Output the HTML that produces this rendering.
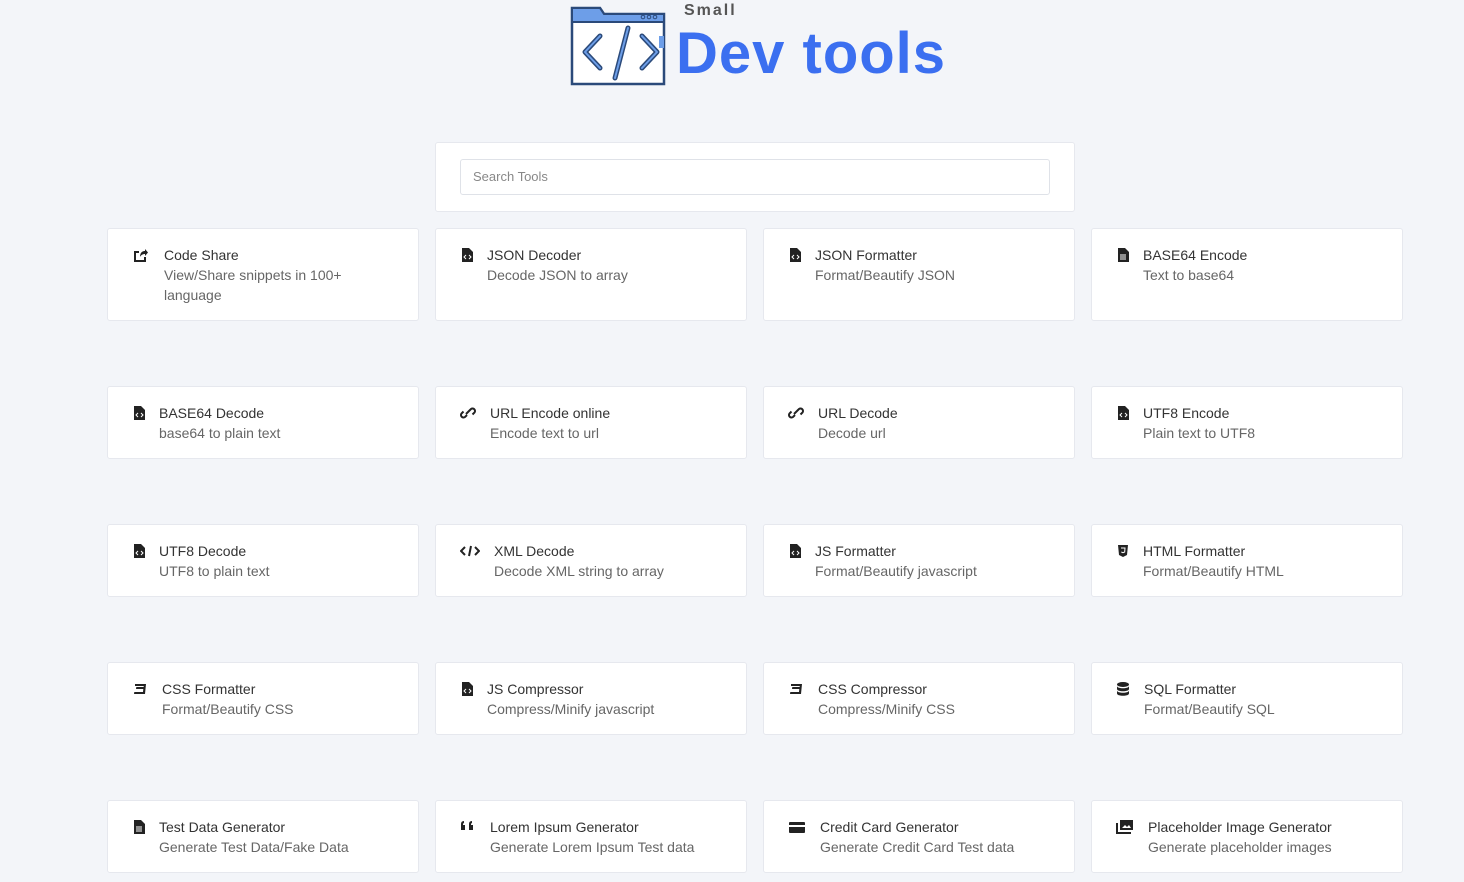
<!DOCTYPE html>
<html><head><meta charset="utf-8"><style>
body{margin:0;background:#f3f5f9;font-family:"Liberation Sans",sans-serif;width:1464px;height:882px;overflow:hidden;position:relative}
.logo{position:absolute;left:570px;top:0}
.small{position:absolute;left:684px;top:2px;font-size:16px;font-weight:bold;color:#555;letter-spacing:2px}
.dev{position:absolute;left:676px;top:20px;font-size:58px;font-weight:bold;color:#3b6ff0;letter-spacing:1px}
.sbox{position:absolute;left:435px;top:142px;width:638px;height:68px;background:#fff;border:1px solid #e6e8ee;border-radius:3px}
.sin{position:absolute;left:24px;top:16px;width:590px;height:36px;border:1px solid #dfe2e8;border-radius:3px;font-size:13px;color:#888;line-height:34px;padding-left:12px;box-sizing:border-box}
.c{position:absolute;width:312px;background:#fff;border:1px solid #e6e8ee;border-radius:3px;box-sizing:border-box}
.c svg{position:absolute;left:24px;top:19px}
.t{position:absolute;top:16px;font-size:14px;line-height:20px;color:#333;margin-left:-1px}
.d{color:#666}
</style></head><body>
<svg class="logo" width="100" height="88" viewBox="0 0 100 88">
<path d="M2 8 h28 l4 6 h60 v70 h-92z" fill="#fff" stroke="#2b4a7a" stroke-width="2.5"/>
<path d="M2 8 h28 l4 6 h60 v8 h-92z" fill="#6d9ee8" stroke="#2b4a7a" stroke-width="2"/>
<circle cx="73" cy="17" r="1.8" fill="none" stroke="#2b4a7a"/><circle cx="79" cy="17" r="1.8" fill="none" stroke="#2b4a7a"/><circle cx="85" cy="17" r="1.8" fill="none" stroke="#2b4a7a"/>
<rect x="89" y="36" width="5" height="12" fill="#6d9ee8"/>
<path d="M30 36 L15 52 L30 68 M72 36 L87 52 L72 68" fill="none" stroke="#2b4a7a" stroke-width="5" stroke-linecap="round" stroke-linejoin="round"/>
<path d="M30 36 L15 52 L30 68 M72 36 L87 52 L72 68" fill="none" stroke="#6d9ee8" stroke-width="2" stroke-linecap="round" stroke-linejoin="round"/>
<path d="M58 28 L45 78" stroke="#2b4a7a" stroke-width="5" stroke-linecap="round"/><path d="M58 28 L45 78" stroke="#6d9ee8" stroke-width="2" stroke-linecap="round"/>
</svg>
<div class="small">Small</div>
<div class="dev">Dev tools</div>
<div class="sbox"><div class="sin">Search Tools</div></div>

<div class="c" style="left:107px;top:228px;height:93px"><svg width="16" height="14"><path d="M2 3h5v2H4v7h8v-3h2v5H2z M8 9c0-4 2-6 5-6V1l3 3.5-3 3.5V6c-2 0-4 1-5 3z" fill="#222"/></svg><div class="t" style="left:57px">Code Share<br><span class="d">View/Share snippets in 100+<br>language</span></div></div>
<div class="c" style="left:435px;top:228px;height:93px"><svg width="14" height="14"><path d="M2 0h7l4 4v10H2z" fill="#222"/><path d="M6 7l-2 2 2 2M9 7l2 2-2 2" stroke="#fff" fill="none"/></svg><div class="t" style="left:52px">JSON Decoder<br><span class="d">Decode JSON to array</span></div></div>
<div class="c" style="left:763px;top:228px;height:93px"><svg width="14" height="14"><path d="M2 0h7l4 4v10H2z" fill="#222"/><path d="M6 7l-2 2 2 2M9 7l2 2-2 2" stroke="#fff" fill="none"/></svg><div class="t" style="left:52px">JSON Formatter<br><span class="d">Format/Beautify JSON</span></div></div>
<div class="c" style="left:1091px;top:228px;height:93px"><svg width="14" height="14"><path d="M2 0h7l4 4v10H2z" fill="#222"/><path d="M4 7h6M4 9h6M4 11h6" stroke="#fff"/></svg><div class="t" style="left:52px">BASE64 Encode<br><span class="d">Text to base64</span></div></div>

<div class="c" style="left:107px;top:386px;height:73px"><svg width="14" height="14"><path d="M2 0h7l4 4v10H2z" fill="#222"/><path d="M6 7l-2 2 2 2M9 7l2 2-2 2" stroke="#fff" fill="none"/></svg><div class="t" style="left:52px">BASE64 Decode<br><span class="d">base64 to plain text</span></div></div>
<div class="c" style="left:435px;top:386px;height:73px"><svg width="16" height="14"><path d="M7 9l-2 2a2.5 2.5 0 01-3.5-3.5l2-2M9 5l2-2a2.5 2.5 0 013.5 3.5l-2 2M6 8l4-4" stroke="#222" stroke-width="2" fill="none"/></svg><div class="t" style="left:55px">URL Encode online<br><span class="d">Encode text to url</span></div></div>
<div class="c" style="left:763px;top:386px;height:73px"><svg width="16" height="14"><path d="M7 9l-2 2a2.5 2.5 0 01-3.5-3.5l2-2M9 5l2-2a2.5 2.5 0 013.5 3.5l-2 2M6 8l4-4" stroke="#222" stroke-width="2" fill="none"/></svg><div class="t" style="left:55px">URL Decode<br><span class="d">Decode url</span></div></div>
<div class="c" style="left:1091px;top:386px;height:73px"><svg width="14" height="14"><path d="M2 0h7l4 4v10H2z" fill="#222"/><path d="M6 7l-2 2 2 2M9 7l2 2-2 2" stroke="#fff" fill="none"/></svg><div class="t" style="left:52px">UTF8 Encode<br><span class="d">Plain text to UTF8</span></div></div>

<div class="c" style="left:107px;top:524px;height:73px"><svg width="14" height="14"><path d="M2 0h7l4 4v10H2z" fill="#222"/><path d="M6 7l-2 2 2 2M9 7l2 2-2 2" stroke="#fff" fill="none"/></svg><div class="t" style="left:52px">UTF8 Decode<br><span class="d">UTF8 to plain text</span></div></div>
<div class="c" style="left:435px;top:524px;height:73px"><svg width="20" height="14"><path d="M5 3L1 7l4 4M15 3l4 4-4 4M11 2L9 12" stroke="#222" stroke-width="2" fill="none"/></svg><div class="t" style="left:59px">XML Decode<br><span class="d">Decode XML string to array</span></div></div>
<div class="c" style="left:763px;top:524px;height:73px"><svg width="14" height="14"><path d="M2 0h7l4 4v10H2z" fill="#222"/><path d="M6 7l-2 2 2 2M9 7l2 2-2 2" stroke="#fff" fill="none"/></svg><div class="t" style="left:52px">JS Formatter<br><span class="d">Format/Beautify javascript</span></div></div>
<div class="c" style="left:1091px;top:524px;height:73px"><svg width="14" height="14"><path d="M2 1h10l-1 10-4 2-4-2z" fill="#222"/><path d="M5 4h4l-.3 4-1.7.7-1.7-.7" stroke="#fff" fill="none"/></svg><div class="t" style="left:52px">HTML Formatter<br><span class="d">Format/Beautify HTML</span></div></div>

<div class="c" style="left:107px;top:662px;height:73px"><svg width="16" height="14"><path d="M3 2h11l-1 10H2l.3-2H11l.3-3H4l.3-2h7.3l.2-1H3z" fill="#222"/></svg><div class="t" style="left:55px">CSS Formatter<br><span class="d">Format/Beautify CSS</span></div></div>
<div class="c" style="left:435px;top:662px;height:73px"><svg width="14" height="14"><path d="M2 0h7l4 4v10H2z" fill="#222"/><path d="M6 7l-2 2 2 2M9 7l2 2-2 2" stroke="#fff" fill="none"/></svg><div class="t" style="left:52px">JS Compressor<br><span class="d">Compress/Minify javascript</span></div></div>
<div class="c" style="left:763px;top:662px;height:73px"><svg width="16" height="14"><path d="M3 2h11l-1 10H2l.3-2H11l.3-3H4l.3-2h7.3l.2-1H3z" fill="#222"/></svg><div class="t" style="left:55px">CSS Compressor<br><span class="d">Compress/Minify CSS</span></div></div>
<div class="c" style="left:1091px;top:662px;height:73px"><svg width="14" height="14"><ellipse cx="7" cy="2.5" rx="6" ry="2.5" fill="#222"/><path d="M1 4c0 3 12 3 12 0v3c0 3-12 3-12 0zM1 8.5c0 3 12 3 12 0v3c0 3-12 3-12 0z" fill="#222"/></svg><div class="t" style="left:53px">SQL Formatter<br><span class="d">Format/Beautify SQL</span></div></div>

<div class="c" style="left:107px;top:800px;height:73px"><svg width="14" height="14"><path d="M2 0h7l4 4v10H2z" fill="#222"/><path d="M4 7h6M4 9h6M4 11h6" stroke="#fff"/></svg><div class="t" style="left:52px">Test Data Generator<br><span class="d">Generate Test Data/Fake Data</span></div></div>
<div class="c" style="left:435px;top:800px;height:73px"><svg width="16" height="14"><path d="M1 7V4q0-3 3-3v2q-1 0-1 2h2v5H1zM9 7V4q0-3 3-3v2q-1 0-1 2h2v5H9z" fill="#222"/></svg><div class="t" style="left:55px">Lorem Ipsum Generator<br><span class="d">Generate Lorem Ipsum Test data</span></div></div>
<div class="c" style="left:763px;top:800px;height:73px"><svg width="18" height="14"><rect x="1" y="2" width="16" height="11" rx="1" fill="#222"/><rect x="1" y="5" width="16" height="2" fill="#fff"/></svg><div class="t" style="left:57px">Credit Card Generator<br><span class="d">Generate Credit Card Test data</span></div></div>
<div class="c" style="left:1091px;top:800px;height:73px"><svg width="18" height="14"><path d="M1 3v10h14" stroke="#222" stroke-width="2" fill="none"/><rect x="4" y="0" width="13" height="10" fill="#222"/><path d="M6 8l3-3 2 2 2-2 2 3z" fill="#fff"/></svg><div class="t" style="left:57px">Placeholder Image Generator<br><span class="d">Generate placeholder images</span></div></div>
</body></html>
